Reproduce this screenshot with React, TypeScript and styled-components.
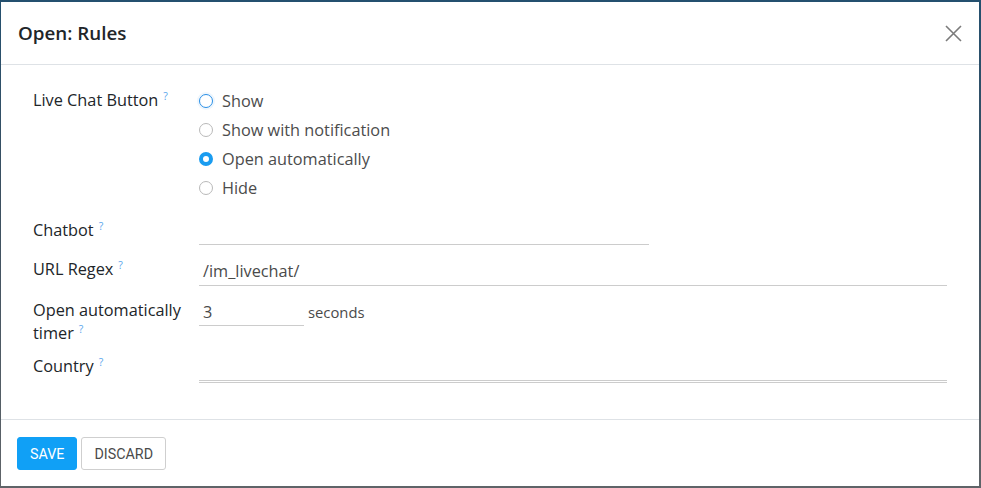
import React from 'react';
import styled, { createGlobalStyle } from 'styled-components';

const GlobalStyle = createGlobalStyle`
  html, body {
    margin: 0;
    padding: 0;
    height: 100%;
  }
  body {
    background: linear-gradient(180deg, #24506f 0%, #3b4f60 40%, #5f6468 100%);
    font-family: 'Open Sans', 'Noto Sans', Arial, sans-serif;
    overflow: hidden;
  }
`;

const Modal = styled.div`
  width: 978px;
  height: 484px;
  margin: 2px 0 0 1px;
  background: #fff;
  display: flex;
  flex-direction: column;
  box-sizing: border-box;
`;

const Header = styled.header`
  height: 63px;
  flex-shrink: 0;
  box-sizing: border-box;
  display: flex;
  align-items: center;
  justify-content: space-between;
  padding: 0 16px 0 17px;
  border-bottom: 1px solid #dee2e6;

  h4 {
    margin: 0;
    font-size: 18.8px;
    font-weight: 600;
    color: #212529;
  }
`;

const CloseButton = styled.button`
  width: 20px;
  height: 20px;
  border: none;
  background: none;
  padding: 0;
  display: flex;
  align-items: center;
  justify-content: center;
  cursor: pointer;
`;

const Body = styled.main`
  flex: 1;
  padding: 24px 32px 0 32px;
  border-bottom: 1px solid #dee2e6;
`;

const Row = styled.div<{ $gap?: number }>`
  display: grid;
  grid-template-columns: 166px 1fr;
  margin-top: ${(p) => p.$gap ?? 0}px;
`;

const Label = styled.label`
  font-size: 16.3px;
  line-height: 23px;
  color: #212529;
  padding-right: 8px;
`;

const Help = styled.span`
  display: inline-block;
  vertical-align: 6px;
  line-height: 8px;
  color: #5aa6ec;
  font-size: 10.5px;
  margin-left: 5px;
`;

const RadioGroup = styled.div`
  display: flex;
  flex-direction: column;
  gap: 6.3px;
`;

const RadioItem = styled.div`
  display: flex;
  align-items: center;
  height: 23px;
  font-size: 16.3px;
  color: #4c4c4c;
`;

const RadioDot = styled.span<{ $checked?: boolean; $focus?: boolean }>`
  width: 14px;
  height: 14px;
  box-sizing: border-box;
  border-radius: 50%;
  margin-right: 9px;
  flex-shrink: 0;
  border: ${(p) =>
    p.$checked ? '4px solid #1a9cf0' : p.$focus ? '1.5px solid #2a8fe6' : '1px solid #b9b9b9'};
  background: #fff;
  box-shadow: ${(p) => (p.$focus ? '0 0 0 2px rgba(42, 143, 230, 0.08)' : 'none')};
`;

const Input = styled.div<{ $width?: number; $height: number }>`
  width: ${(p) => (p.$width ? `${p.$width}px` : '100%')};
  height: ${(p) => p.$height}px;
  box-sizing: border-box;
  border-bottom: 1px solid #cccccc;
  font-size: 16.3px;
  color: #4a4a4a;
  padding-left: 4px;
  display: flex;
  align-items: center;
`;

const Inline = styled.div`
  display: flex;
  align-items: flex-start;
`;

const Unit = styled.span`
  font-size: 14.8px;
  color: #4a4a4a;
  margin-left: 4px;
  line-height: 26px;
`;

const TagsField = styled.div`
  border-bottom: 1px solid #cccccc;
  padding-bottom: 1px;
`;

const Footer = styled.footer`
  height: 66px;
  flex-shrink: 0;
  box-sizing: border-box;
  padding: 17px 16px 0 16px;
  display: flex;
  align-items: flex-start;
  gap: 4px;
`;

const Button = styled.button<{ $primary?: boolean }>`
  height: 33px;
  padding: 0 12px;
  border-radius: 3px;
  font-family: Roboto, 'Noto Sans', Arial, sans-serif;
  font-size: 14.3px;
  text-transform: uppercase;
  cursor: pointer;
  border: 1px solid ${(p) => (p.$primary ? '#10a0f6' : '#cfcfcf')};
  background: ${(p) => (p.$primary ? '#10a0f6' : '#fff')};
  color: ${(p) => (p.$primary ? '#fff' : '#4a4a4a')};
`;

const options = [
  { label: 'Show', focus: true },
  { label: 'Show with notification' },
  { label: 'Open automatically', checked: true },
  { label: 'Hide' },
];

export default function App() {
  return (
    <>
      <GlobalStyle />
      <Modal>
        <Header>
          <h4>Open: Rules</h4>
          <CloseButton aria-label="Close">
            <svg width="17" height="17" viewBox="0 0 17 17">
              <path d="M1 1L16 16M16 1L1 16" stroke="#7b7b7b" strokeWidth="1.6" fill="none" />
            </svg>
          </CloseButton>
        </Header>
        <Body>
          <Row>
            <Label>
              Live Chat Button<Help>?</Help>
            </Label>
            <RadioGroup>
              {options.map((o) => (
                <RadioItem key={o.label}>
                  <RadioDot $checked={o.checked} $focus={o.focus} />
                  {o.label}
                </RadioItem>
              ))}
            </RadioGroup>
          </Row>
          <Row $gap={19}>
            <Label>
              Chatbot<Help>?</Help>
            </Label>
            <Input $width={450} $height={26} />
          </Row>
          <Row $gap={13}>
            <Label>
              URL Regex<Help>?</Help>
            </Label>
            <Input $height={28}>/im_livechat/</Input>
          </Row>
          <Row $gap={13}>
            <Label>
              Open automatically timer<Help>?</Help>
            </Label>
            <Inline>
              <Input $width={105} $height={27}>3</Input>
              <Unit>seconds</Unit>
            </Inline>
          </Row>
          <Row $gap={10}>
            <Label>
              Country<Help>?</Help>
            </Label>
            <TagsField>
              <Input $height={26} />
            </TagsField>
          </Row>
        </Body>
        <Footer>
          <Button $primary>Save</Button>
          <Button>Discard</Button>
        </Footer>
      </Modal>
    </>
  );
}
